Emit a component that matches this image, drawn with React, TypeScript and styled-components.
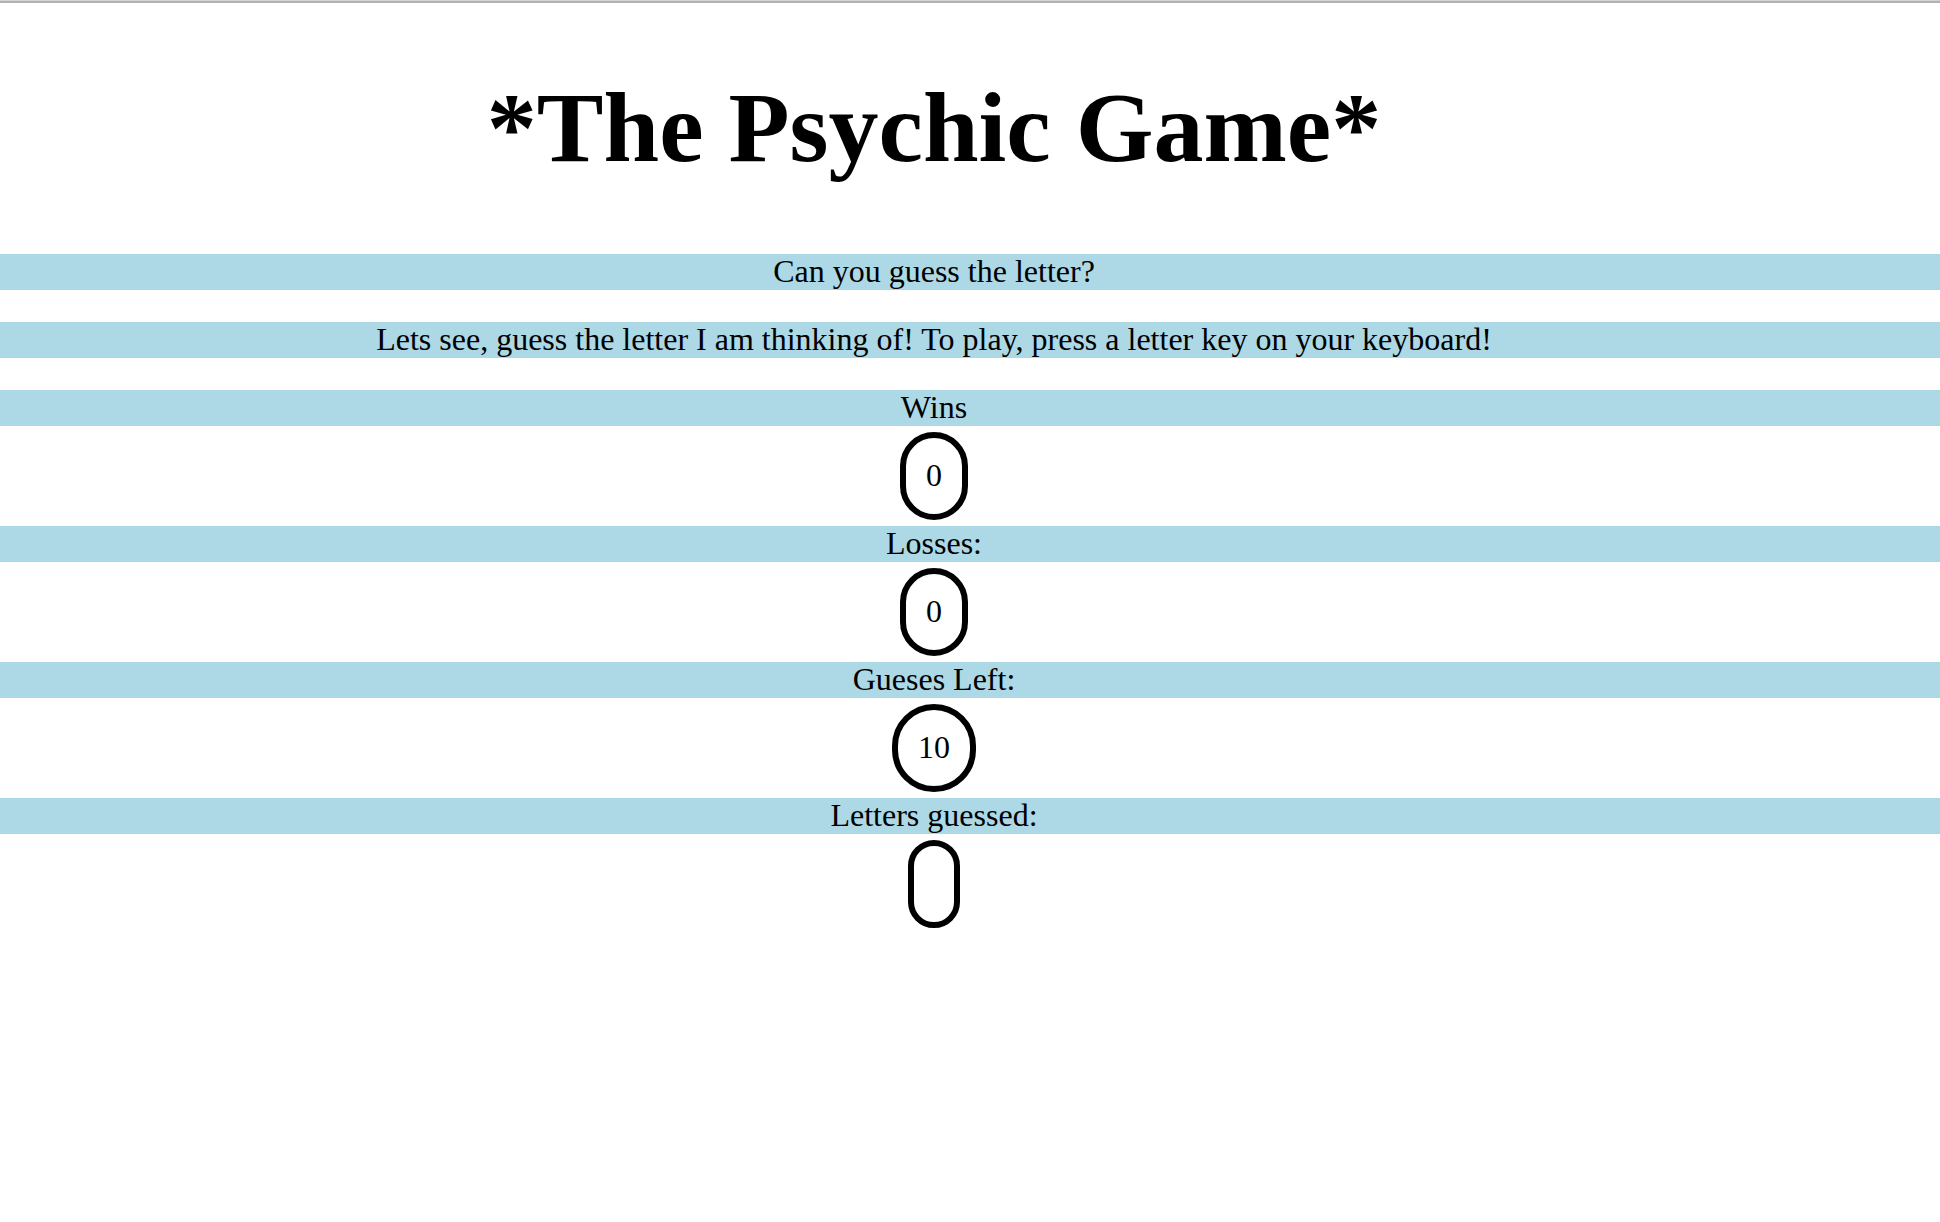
import React from "react";
import styled, { createGlobalStyle, css } from "styled-components";

const GlobalStyle = createGlobalStyle`
  html, body {
    margin: 0;
    padding: 0;
    background: #ffffff;
  }
  body {
    font-family: "Liberation Serif", "Times New Roman", Times, serif;
    color: #000000;
  }
`;

const centred = css`
  text-align: center;
  padding-right: 72px;
`;

const Page = styled.main`
  display: flex;
  flex-direction: column;
  min-height: 1222px;
  border-top: 1px solid #d4d4d4;
  box-sizing: border-box;
`;

const TopRule = styled.div`
  height: 2px;
  background: #b2b2b2;
`;

const Title = styled.h1`
  ${centred};
  margin: 67px 0 69px;
  font-size: 100px;
  line-height: 115px;
  font-weight: bold;
`;

const Intro = styled.section`
  display: flex;
  flex-direction: column;
  gap: 32px;
  margin-bottom: 32px;
`;

const Banner = styled.div`
  ${centred};
  height: 36px;
  line-height: 34px;
  font-size: 32px;
  background: #add8e6;
`;

const Stat = styled.section`
  display: flex;
  flex-direction: column;
`;

const BubbleRow = styled.div`
  ${centred};
  display: flex;
  justify-content: center;
  padding-top: 6px;
  padding-bottom: 6px;
`;

const Bubble = styled.span`
  display: inline-block;
  box-sizing: border-box;
  height: 88px;
  padding: 19px 20px 21px;
  border: 6px solid #000000;
  border-radius: 50px;
  font-size: 32px;
  line-height: 36px;
`;

const stats = [
  { label: "Wins", value: "0" },
  { label: "Losses:", value: "0" },
  { label: "Gueses Left:", value: "10" },
  { label: "Letters guessed:", value: "" },
];

export default function App() {
  return (
    <>
      <GlobalStyle />
      <Page>
        <TopRule />
        <Title>*The Psychic Game*</Title>
        <Intro>
          <Banner>Can you guess the letter?</Banner>
          <Banner>
            Lets see, guess the letter I am thinking of! To play, press a letter key on your keyboard!
          </Banner>
        </Intro>
        {stats.map((s) => (
          <Stat key={s.label}>
            <Banner>{s.label}</Banner>
            <BubbleRow>
              <Bubble>{s.value}</Bubble>
            </BubbleRow>
          </Stat>
        ))}
      </Page>
    </>
  );
}
